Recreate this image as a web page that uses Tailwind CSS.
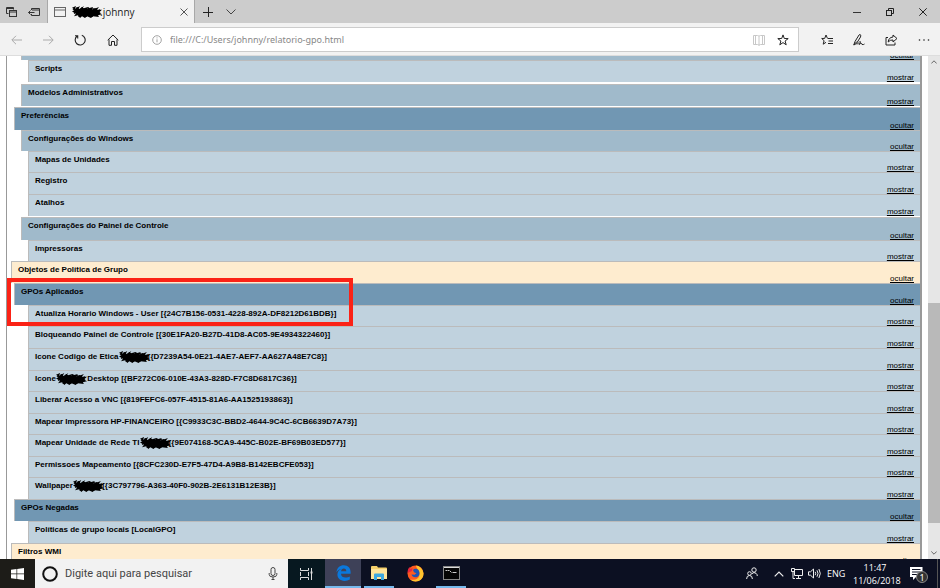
<!DOCTYPE html>
<html lang="pt-BR">
<head>
<meta charset="utf-8">
<title>johnny</title>
<script src="https://cdn.jsdelivr.net/npm/@tailwindcss/browser@4"></script>
</head>
<body class="flex h-screen flex-col overflow-hidden bg-white font-['Noto_Sans','Open_Sans',sans-serif] text-black">
<svg class="hidden">
  <symbol id="scribble" viewBox="0 0 30 13" preserveAspectRatio="none">
    <path d="M0 2L4 0L3 3L8 0L6 4L12 0L10 3L16 1L15 3L21 1L20 4L27 1L25 4L30 4L27 7L30 9L26 10L27 12L21 11L19 13L15 11L13 13L10 11L8 13L6 10L2 11L4 8L0 6L3 4Z" fill="#000"/>
    <path d="M1 3L9 9L5 2L13 11L10 2L19 11L16 2L25 10L21 3L28 8M2 8L10 3L7 11L17 3L14 11L23 3L20 11L28 4" fill="none" stroke="#000" stroke-width="1.6" stroke-linejoin="round"/>
  </symbol>
</svg>

<header class="shrink-0">
  <div class="flex h-[23px] items-center bg-[#cccccc]">
    <div class="flex w-12 items-center justify-between border-r border-[#a8a8a8] pr-1.5 pl-1.5 h-full">
      <button aria-label="Guias reservadas"><svg width="12" height="12" viewBox="0 0 12 12" fill="none" stroke="#333"><path d="M2.500 7.500h-2v-6h7v2M.5 2.500h7"/><rect x="3.500" y="4.500" width="7" height="6"/><path d="M3.500 6h7"/></svg></button>
      <button aria-label="Reservar guias"><svg width="13" height="10" viewBox="0 0 13 10" fill="none" stroke="#333"><path d="M3.500 3V1.500h8v7h-8V7M4 3h7M0.500 5.500h6M2.500 3.500l-2 2 2 2"/></svg></button>
    </div>
    <div class="flex h-full w-[147px] items-center bg-[#f2f2f2] px-1.5 border-r border-[#a8a8a8]">
      <svg width="12" height="10" viewBox="0 0 12 10" fill="none" stroke="#666"><rect x=".5" y=".5" width="11" height="9"/><path d="M1 3h10"/></svg>
      <svg class="ml-1.5 h-3 w-[30px]"><use href="#scribble"/></svg>
      <span class="-ml-0.5 font-['Open_Sans'] text-[10px] leading-4 text-[#222]">.johnny</span>
      <button class="ml-auto" aria-label="Fechar guia"><svg width="8" height="8" viewBox="0 0 8 8" stroke="#555"><path d="M.5 .5l7 7M7.500 .5l-7 7"/></svg></button>
    </div>
    <button class="ml-2" aria-label="Nova guia"><svg width="10" height="10" viewBox="0 0 10 10" stroke="#222"><path d="M0 5.500h10M5.500 0v10"/></svg></button>
    <button class="ml-[13px]" aria-label="Visualizar guias"><svg width="10" height="6" viewBox="0 0 10 6" fill="none" stroke="#444"><path d="M.5 .5L5 5 9.500 .5"/></svg></button>
    <div class="ml-auto flex items-center gap-[25px] pr-[13px]">
      <button aria-label="Minimizar"><svg width="8" height="8" viewBox="0 0 8 8" stroke="#333"><path d="M0 4.500h8"/></svg></button>
      <button aria-label="Restaurar"><svg width="8" height="8" viewBox="0 0 8 8" fill="none" stroke="#222"><rect x=".5" y="2.500" width="5" height="5"/><path d="M2.500 2.500v-2h5v5h-2"/></svg></button>
      <button aria-label="Fechar"><svg width="8" height="8" viewBox="0 0 8 8" stroke="#222"><path d="M.3 .3l7.400 7.400M7.700 .3L.3 7.700"/></svg></button>
    </div>
  </div>
  <div class="flex h-[33px] items-center bg-[#f2f2f2] pt-px border-b border-[#dddddd]">
    <nav class="flex w-[141px] items-center justify-between pr-[22px] pl-[11px]">
      <button aria-label="Voltar"><svg width="11" height="10" viewBox="0 0 11 10" fill="none" stroke="#aaa"><path d="M11 5H1M5 .8L.8 5 5 9.200"/></svg></button>
      <button aria-label="Avançar"><svg width="11" height="10" viewBox="0 0 11 10" fill="none" stroke="#aaa"><path d="M0 5h10M6 .8L10.200 5 6 9.200"/></svg></button>
      <button aria-label="Atualizar"><svg width="12" height="12" viewBox="0 0 12 12" fill="none" stroke="#222" stroke-width="1.100"><path d="M7.800 1.300A5 5 0 1 1 3.200 2M1 1.700h2.700v2.700"/></svg></button>
      <button aria-label="Página inicial"><svg width="12" height="12" viewBox="0 0 12 12" fill="none" stroke="#222"><path d="M.7 6.200L6 1l5.300 5.200M2 5.500v5.800h2.500V7.500h3v3.800H10V5.500"/></svg></button>
    </nav>
    <div class="flex h-[25px] flex-1 items-center border border-[#cccccc] bg-white pl-2.5 pr-[9px]">
      <svg width="10" height="10" viewBox="0 0 10 10" fill="none" stroke="#999" stroke-width=".9"><circle cx="5" cy="5" r="4.300"/><path d="M5 4.300v3M5 2.400v1"/></svg>
      <input aria-label="Endereço" class="ml-2 min-w-0 flex-1 text-[9px] leading-4 text-[#888888] outline-none" value="file:///C:/Users/johnny/relatorio-gpo.html">
      <button aria-label="Modo de leitura"><svg width="12" height="12" viewBox="0 0 12 12" fill="none" stroke="#c8c8c8"><path d="M.5 1.500h4q1.500 0 1.500 1 0-1 1.500-1h4v9h-4Q6 10.500 6 11.500 6 10.500 4.500 10.500h-4zM6 2.500v9M2.500 2v8M9.500 2v8"/></svg></button>
      <button class="ml-3" aria-label="Favoritos"><svg width="12" height="12" viewBox="0 0 12 12" fill="none" stroke="#222"><path d="M6 .9l1.300 3.600 3.900.1-3.100 2.400 1.100 3.800L6 8.600l-3.200 2.200 1.100-3.800L.8 4.600l3.900-.1z"/></svg></button>
    </div>
    <div class="flex w-[141px] items-center justify-between pr-2.5 pl-[22px]">
      <button aria-label="Hub"><svg width="12" height="12" viewBox="0 0 12 12" fill="none" stroke="#222"><path d="M7 4.500h5M7.500 7h4.500M7 9.500h5M6.500 4.500L5 1 3.700 4.400.7 4.500l2.400 2.200-.9 3.500L5 8.300"/></svg></button>
      <button aria-label="Anotações"><svg width="12" height="12" viewBox="0 0 12 12" fill="none" stroke="#222"><path d="M.8 11L2 7.500 6 1q1-1 1.500-.2T7.500 3L3.500 9.500zM1 10.500l3-3M4 10.500q3-3.500 3.500-2.800T6 10.500q2-1.500 2.600-1t.4 1q1.500.4 2.500-.5"/></svg></button>
      <button aria-label="Compartilhar"><svg width="13" height="12" viewBox="0 0 13 12" fill="none" stroke="#222"><path d="M3 3.500H1v7.500h9V8.500M8 1l4 3.500L8 8V6Q5 5.700 3.200 8 3.500 3.500 8 3z"/></svg></button>
      <button aria-label="Mais"><svg width="12" height="4" viewBox="0 0 12 4" fill="#222"><circle cx="1.500" cy="2" r=".8"/><circle cx="6" cy="2" r=".8"/><circle cx="10.500" cy="2" r=".8"/></svg></button>
    </div>
  </div>
</header>

<div class="flex min-h-0 flex-1">
  <main class="relative min-w-0 flex-1 overflow-hidden pl-1.5 pr-1.5">
    <div class="flex h-full flex-col border-l border-r-2 border-[#999999] pl-1 font-['Liberation_Sans',Arial,sans-serif] text-[8px] leading-[10px] text-black
      [&_h2]:pt-[3px] [&_h2]:pl-1.5 [&_h2]:font-bold [&_h2]:whitespace-nowrap [&_a]:self-end [&_a]:leading-[8px] [&_a]:underline [&_a]:pr-1.5
      [&_section]:flex [&_section]:shrink-0 [&_section]:justify-between [&_section]:border-t [&_section]:border-l [&_section]:border-[#bbbbbb]">
      <section class="-mt-[18px] ml-2.5 h-[22px] bg-[#a0bacb]"><h2></h2><a href="#">ocultar</a></section>
      <section class="ml-[17px] h-[22px] bg-[#c0d2de]"><h2>Scripts</h2><a href="#">mostrar</a></section>
      <section class="mt-0.5 ml-2.5 h-[22px] bg-[#a0bacb]"><h2>Modelos Administrativos</h2><a href="#">mostrar</a></section>
      <section class="mt-px ml-[3px] h-[23px] bg-[#7197b3]"><h2>Preferências</h2><a href="#">ocultar</a></section>
      <section class="ml-2.5 h-[21px] bg-[#a0bacb]"><h2>Configurações do Windows</h2><a href="#">ocultar</a></section>
      <section class="ml-[17px] h-[21px] bg-[#c0d2de]"><h2>Mapas de Unidades</h2><a href="#">mostrar</a></section>
      <section class="ml-[17px] h-[22px] bg-[#c0d2de]"><h2>Registro</h2><a href="#">mostrar</a></section>
      <section class="ml-[17px] h-[22px] bg-[#c0d2de]"><h2>Atalhos</h2><a href="#">mostrar</a></section>
      <section class="mt-px ml-2.5 h-[23px] bg-[#a0bacb]"><h2>Configurações do Painel de Controle</h2><a href="#">ocultar</a></section>
      <section class="ml-[17px] h-[21px] bg-[#c0d2de]"><h2>Impressoras</h2><a href="#">mostrar</a></section>
      <section class="h-[22px] bg-[#feeccf]"><h2>Objetos de Política de Grupo</h2><a href="#">ocultar</a></section>
      <section class="ml-[3px] h-[22px] bg-[#7197b3]"><h2>GPOs Aplicados</h2><a href="#">ocultar</a></section>
      <section class="ml-[17px] h-[21px] bg-[#c0d2de]"><h2>Atualiza Horario Windows - User [{24C7B156-0531-4228-892A-DF8212D61BDB}]</h2><a href="#">mostrar</a></section>
      <section class="ml-[17px] h-[22px] bg-[#c0d2de]"><h2>Bloqueando Painel de Controle [{30E1FA20-B27D-41D8-AC05-9E4934322460}]</h2><a href="#">mostrar</a></section>
      <section class="ml-[17px] h-[22px] bg-[#c0d2de]"><h2>Icone Codigo de Etica <svg class="-mx-0.5 -my-1 inline h-3 w-[31px]"><use href="#scribble"/></svg>[{D7239A54-0E21-4AE7-AEF7-AA627A48E7C8}]</h2><a href="#">mostrar</a></section>
      <section class="ml-[17px] h-[21px] bg-[#c0d2de]"><h2>Icone <svg class="-mx-0.5 -my-1 inline h-3 w-[31px]"><use href="#scribble"/></svg> Desktop [{BF272C06-010E-43A3-828D-F7C8D6817C36}]</h2><a href="#">mostrar</a></section>
      <section class="ml-[17px] h-[22px] bg-[#c0d2de]"><h2>Liberar Acesso a VNC [{819FEFC6-057F-4515-81A6-AA1525193863}]</h2><a href="#">mostrar</a></section>
      <section class="ml-[17px] h-[21px] bg-[#c0d2de]"><h2>Mapear Impressora HP-FINANCEIRO [{C9933C3C-BBD2-4644-9C4C-6CB6639D7A73}]</h2><a href="#">mostrar</a></section>
      <section class="ml-[17px] h-[22px] bg-[#c0d2de]"><h2>Mapear Unidade de Rede TI <svg class="-mx-0.5 -my-1 inline h-3 w-[31px]"><use href="#scribble"/></svg>[{9E074168-5CA9-445C-B02E-BF69B03ED577}]</h2><a href="#">mostrar</a></section>
      <section class="ml-[17px] h-[21px] bg-[#c0d2de]"><h2>Permissoes Mapeamento [{8CFC230D-E7F5-47D4-A9B8-B142EBCFE053}]</h2><a href="#">mostrar</a></section>
      <section class="ml-[17px] h-[22px] bg-[#c0d2de]"><h2>Wallpaper <svg class="-mx-0.5 -my-1 inline h-3 w-[31px]"><use href="#scribble"/></svg>[{3C797796-A363-40F0-902B-2E6131B12E3B}]</h2><a href="#">mostrar</a></section>
      <section class="ml-[3px] h-[22px] bg-[#7197b3]"><h2>GPOs Negadas</h2><a href="#">ocultar</a></section>
      <section class="ml-[17px] h-[22px] bg-[#c0d2de]"><h2>Políticas de grupo locais [LocalGPO]</h2><a href="#">mostrar</a></section>
      <section class="h-[22px] bg-[#feeccf]"><h2>Filtros WMI</h2><a href="#">ocultar</a></section>
    </div>
    <div class="pointer-events-none absolute top-[222px] left-[7px] h-12 w-[346px] border-4 border-[#fb2216]"></div>
  </main>
  <div class="flex w-3 shrink-0 flex-col items-center justify-between bg-[#e6e6e6] py-1">
    <svg width="6" height="4" viewBox="0 0 6 4" fill="none" stroke="#666"><path d="M.3 3.500L3 .8l2.700 2.700"/></svg>
    <div class="relative w-full flex-1"><div class="absolute w-full bg-[#b9b9b9]" style="top:49.100%;height:45.200%"></div></div>
    <svg width="6" height="4" viewBox="0 0 6 4" fill="none" stroke="#666"><path d="M.3 .5L3 3.200 5.700 .5"/></svg>
  </div>
</div>

<footer class="flex h-[29px] shrink-0 items-center bg-[#0c1022] text-white">
  <button class="grid h-full w-[35px] place-items-center bg-[#1d1c18]" aria-label="Iniciar"><svg width="13" height="12" viewBox="0 0 13 12" fill="#fff"><path d="M0 1.700L5.500 1v4.600H0zM6.200 .9L13 0v5.600H6.200zM0 6.300h5.500V11L0 10.200zM6.200 6.300H13V12l-6.800-.9z"/></svg></button>
  <div class="flex h-full w-[253px] items-center bg-[#f2f2f2] pr-2.5 pl-[7px]">
    <svg width="16" height="16" viewBox="0 0 16 16" fill="none" stroke="#111" stroke-width="2"><circle cx="8" cy="8" r="6.800"/></svg>
    <input aria-label="Pesquisar" placeholder="Digite aqui para pesquisar" class="ml-[7px] min-w-0 flex-1 font-[Roboto] text-[11px] leading-4 text-[#444444] outline-none placeholder:text-[#444444]">
    <button aria-label="Pesquisa por voz"><svg width="10" height="13" viewBox="0 0 10 13" fill="none" stroke="#444"><rect x="3" y=".5" width="4" height="8" rx="2"/><path d="M1.200 6v1.500Q1.200 10 5 10t3.800-2.500V6M5 10v3M3.500 12.500h3"/></svg></button>
  </div>
  <button class="grid h-full w-[37px] place-items-center bg-[#071820]" aria-label="Visão de tarefas"><svg width="13" height="12" viewBox="0 0 13 12" fill="none" stroke="#ddd"><path d="M.5 0v2.500h8V0M.5 12V9.500h8V12M11.500 0v12"/><path d="M.5 4v4M8.500 4v4"/><path d="M10.500 4.500h2" stroke-width="2"/></svg></button>
  <button class="grid h-full w-9 place-items-center border-b-2 border-[#76b9ed] bg-[#3e4158]" aria-label="Microsoft Edge"><svg width="15" height="16" viewBox="0 0 15 16" fill="#0a78dc"><path d="M.4 7.200C1 2.800 3.900.2 7.800.2c4.500 0 6.800 3.200 6.800 7v1.600H5c.1 2.600 2 3.800 4.600 3.800 1.700 0 3.100-.5 4.200-1.200v3.200c-1.400.9-3.200 1.300-5.200 1.300-4.600 0-7.200-2.700-7.200-6.300 0-2.600 1.500-4.700 4-5.800C3.300 4.300 1.600 5.400.4 7.200zM5.100 6.200h5.200c0-1.700-.8-2.700-2.500-2.700-1.500 0-2.500 1.100-2.700 2.700z"/></svg></button>
  <button class="mx-[3px] grid h-full w-[30px] place-items-center border-b-2 border-[#76b9ed]" aria-label="Explorador de Arquivos"><svg width="16" height="14" viewBox="0 0 16 14"><path d="M0 1q0-1 1-1h5l1 1.500h8q1 0 1 1V13H0z" fill="#f5cf6b"/><path d="M0 3h16v10H0z" fill="#ffe49b"/><path d="M3 14V8.500q0-1 1-1h8q1 0 1 1V14h-3v-3H6v3z" fill="#3ea8e0"/></svg></button>
  <button class="mx-[3px] grid h-full w-[30px] place-items-center" aria-label="Firefox"><svg width="17" height="17" viewBox="0 0 17 17"><circle cx="8.500" cy="8.500" r="8" fill="#ff5a1f"/><path d="M9 .5c3.500.6 7.300 3.500 7.500 8s-3.500 8-8 8c-2 0-4-.9-5-2 5 1 9-1 9-5.500C12.500 5 9.500 4 9 .5z" fill="#ffc42e"/><path d="M.6 8C.5 5 1.500 3 2.500 2l.7 2 2.300-1-.5 3z" fill="#e8263d"/><path d="M6 5c1.500-2 4-1.500 5.500 0 1.700 2.200 1.300 6-1.500 7-3 .8-5-.8-5.500-2.500l3 .3 2-1.500-2.500-1z" fill="#1d55b5"/></svg></button>
  <button class="mx-[3px] grid h-full w-[30px] place-items-center border-b-2 border-[#76b9ed]" aria-label="Prompt de Comando"><svg width="17" height="14" viewBox="0 0 17 14"><rect x=".5" y=".5" width="16" height="13" fill="#050505" stroke="#888"/><path d="M1 1.500h15" stroke="#ddd"/><path d="M2.500 4.500h2M5.500 4v1M6.500 4.500l2 2M9.500 6.500h4" stroke="#ccc" fill="none"/></svg></button>
  <div class="ml-auto flex h-full items-center">
    <button aria-label="Pessoas"><svg width="12" height="13" viewBox="0 0 12 13" fill="none" stroke="#eee"><circle cx="8" cy="3" r="2.200"/><circle cx="3.500" cy="6.500" r="1.800"/><path d="M.6 12q0-3.500 2.900-3.500T6.400 12M5.800 6.800Q8 4.500 10 6.300q1.300 1 1.300 2.700"/></svg></button>
    <button class="ml-4" aria-label="Mostrar ícones ocultos"><svg width="10" height="6" viewBox="0 0 10 6" fill="none" stroke="#eee" stroke-width="1.200"><path d="M.7 5.300L5 1l4.300 4.300"/></svg></button>
    <button class="ml-[7px]" aria-label="Rede"><svg width="12" height="11" viewBox="0 0 12 11" fill="none" stroke="#eee"><path d="M3.500 1.500h8v6h-8zM7.500 7.500v2.500M5 10.500h5M.5 .5h3v3h-3zM2 3.500V10.500h2"/></svg></button>
    <button class="ml-[5px]" aria-label="Volume"><svg width="13" height="11" viewBox="0 0 13 11" fill="none" stroke="#eee"><path d="M.5 3.800h2L5.500 1v9L2.500 7.200h-2zM7.200 3.800q1 1.700 0 3.400M9 2.300q2 3.200 0 6.400M10.900 1q2.800 4.500 0 9"/></svg></button>
    <span class="ml-1.5 w-[18px] font-['Open_Sans'] text-[9px] leading-3">ENG</span>
    <time class="ml-2 w-[44px] text-center font-['Open_Sans'] text-[9px] leading-[13px] whitespace-nowrap">11:47<br>11/06/2018</time>
    <button class="relative ml-[13px]" aria-label="Notificações, 1 nova"><svg width="13" height="13" viewBox="0 0 13 13"><path d="M0 0h12.500v10H6l-3 3v-3H0z" fill="#fff"/><path d="M2 2.500h8.500M2 5h8.500M2 7.500h5" stroke="#0c1022"/></svg><span class="absolute top-1 left-1.5 grid size-3 place-items-center rounded-full border border-[#888888] bg-[#333333] text-[9px] leading-none">1</span></button>
    <span class="ml-3.5 h-full w-[3px] border-l border-[#555555]"></span>
  </div>
</footer>
</body>
</html>
